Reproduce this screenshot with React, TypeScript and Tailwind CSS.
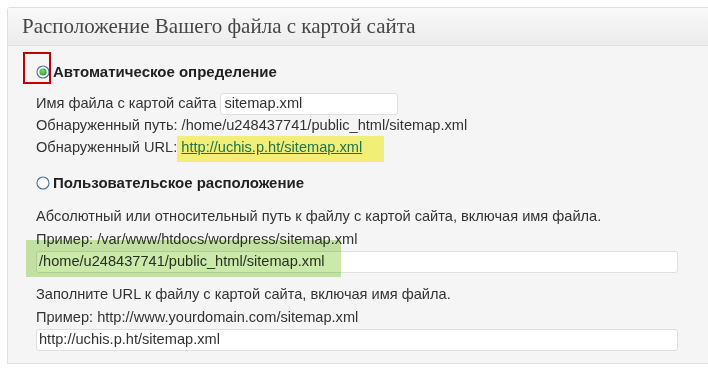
import React from "react";

function Radio({ checked }: { checked?: boolean }) {
  return (
    <svg width="14" height="14" viewBox="0 0 14 14" className="shrink-0">
      <defs>
        <radialGradient id="rg" cx="45%" cy="40%" r="60%">
          <stop offset="0%" stopColor="#7fe07a" />
          <stop offset="100%" stopColor="#1f9a2a" />
        </radialGradient>
      </defs>
      <circle cx="7" cy="7" r="6" fill="#fff" stroke="#4d6f94" strokeWidth="1.1" />
      {checked && <circle cx="7" cy="7" r="3.6" fill="url(#rg)" />}
    </svg>
  );
}

export default function App() {
  return (
    <div className="relative w-[708px] h-[386px] overflow-hidden bg-white pt-[7px] pl-[7px]" style={{ fontFamily: '"Liberation Sans", Arial, sans-serif' }}>
      <div className="w-[720px] rounded-tl-[3px] border border-[#dfdfdf] bg-[#f5f5f5]">
        <div className="h-[38px] flex items-center border-b border-[#dfdfdf] bg-gradient-to-b from-[#f9f9f9] to-[#ececec] pl-[14px]">
          <span className="text-[21px] text-[#464646]" style={{ fontFamily: '"Liberation Serif", Georgia, serif' }}>Расположение Вашего файла с картой сайта</span>
        </div>
        <div className="pl-[28px] pt-[16px] pb-[12px] text-[14.6px] text-[#333]">
          <div className="flex items-center h-[20px] gap-[3px]">
            <Radio checked />
            <span className="font-bold text-[15px] text-[#222]">Автоматическое определение</span>
          </div>
          <div className="mt-[11px] flex items-center h-[22px]">
            <span>Имя файла с картой сайта</span>
            <div className="ml-[4px] w-[178px] h-[22px] rounded-[3px] border border-[#dfdfdf] bg-white flex items-center px-[3px]">sitemap.xml</div>
          </div>
          <div className="h-[22px] flex items-center">Обнаруженный путь: /home/u248437741/public_html/sitemap.xml</div>
          <div className="h-[22px] flex items-center">
            <span>Обнаруженный URL:&nbsp;</span>
            <a className="text-[#21759b] underline">http://uchis.p.ht/sitemap.xml</a>
          </div>
          <div className="mt-[14px] flex items-center h-[20px] gap-[3px]">
            <Radio />
            <span className="font-bold text-[15px] text-[#222]">Пользовательское расположение</span>
          </div>
          <div className="mt-[12px] h-[23px] flex items-center">Абсолютный или относительный путь к файлу с картой сайта, включая имя файла.</div>
          <div className="h-[23px] flex items-center">Пример: /var/www/htdocs/wordpress/sitemap.xml</div>
          <div className="w-[642px] h-[22px] rounded-[3px] border border-[#dfdfdf] bg-white flex items-center px-[2px]">/home/u248437741/public_html/sitemap.xml</div>
          <div className="mt-[10px] h-[23px] flex items-center">Заполните URL к файлу с картой сайта, включая имя файла.</div>
          <div className="h-[23px] flex items-center">Пример: http://www.yourdomain.com/sitemap.xml</div>
          <div className="w-[642px] h-[22px] rounded-[3px] border border-[#dfdfdf] bg-white flex items-center px-[2px]">http://uchis.p.ht/sitemap.xml</div>
        </div>
      </div>
      <div className="absolute left-[23px] top-[52px] w-[28px] h-[32px] border-2 border-[#c00000]" />
      <div className="absolute left-[177px] top-[136px] w-[207px] h-[26px] bg-[#fbf97c] mix-blend-multiply" />
      <div className="absolute left-[26px] top-[240px] w-[315px] h-[37px] bg-[#cbeaaa] mix-blend-multiply" />
    </div>
  );
}
